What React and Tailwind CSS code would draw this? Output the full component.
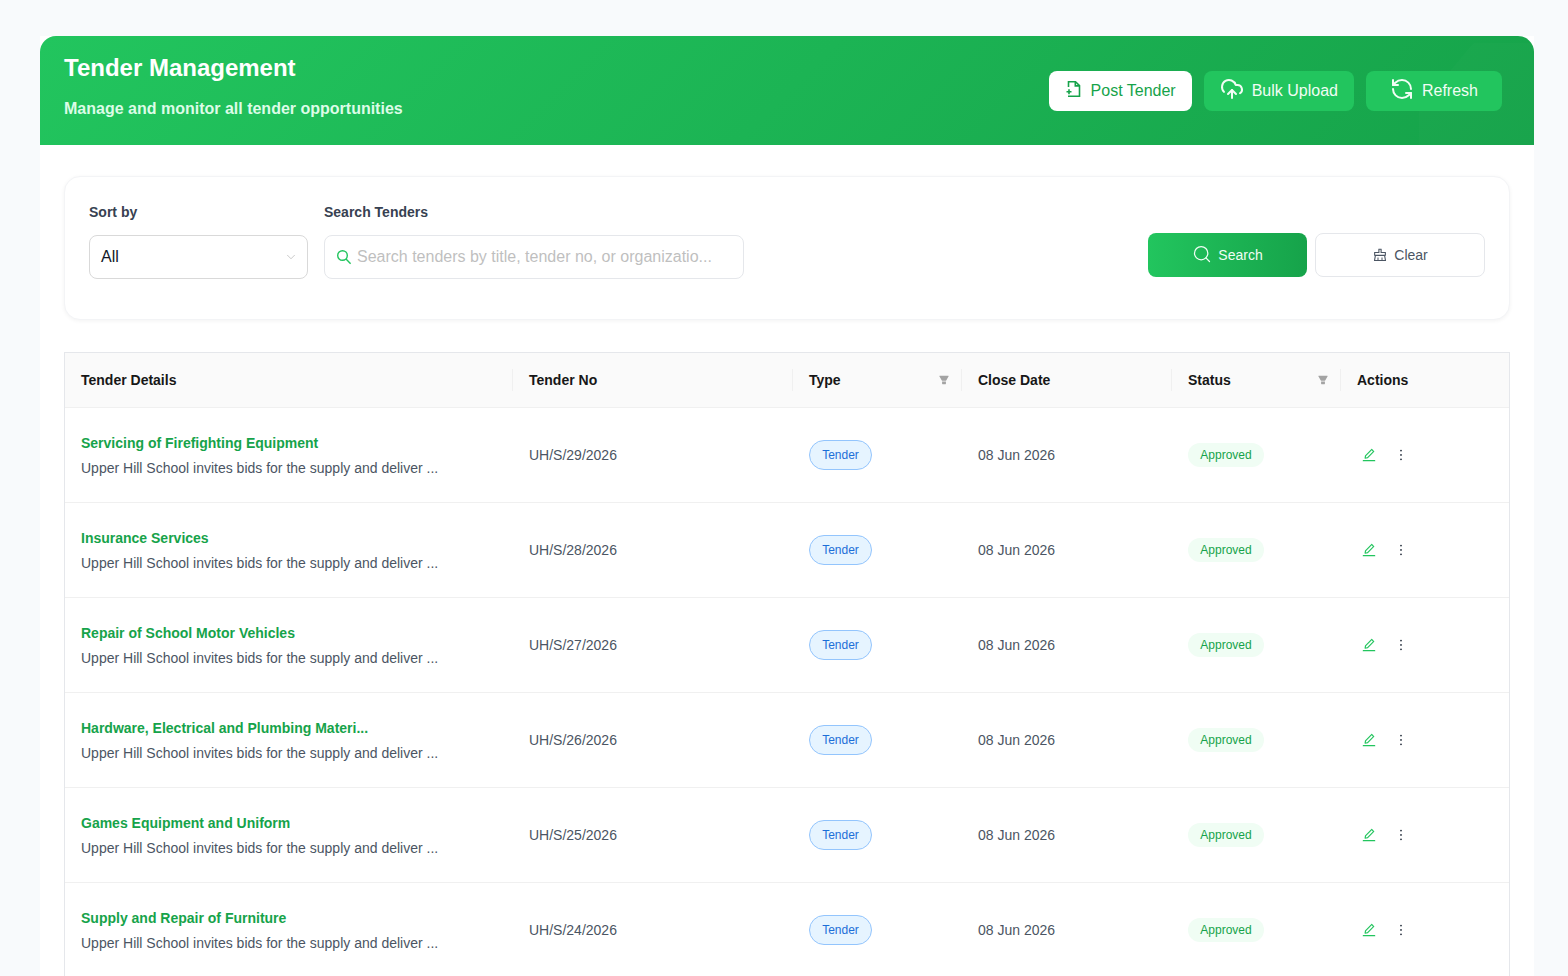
import React from "react";
import { AiFillFilter, AiOutlineClear, AiOutlineEdit, AiOutlineMore } from "react-icons/ai";
import { ChevronDown, CloudUpload, RefreshCcw, Search } from "lucide-react";

const rows = [
  { title: "Servicing of Firefighting Equipment", no: "UH/S/29/2026" },
  { title: "Insurance Services", no: "UH/S/28/2026" },
  { title: "Repair of School Motor Vehicles", no: "UH/S/27/2026" },
  { title: "Hardware, Electrical and Plumbing Materi...", no: "UH/S/26/2026" },
  { title: "Games Equipment and Uniform", no: "UH/S/25/2026" },
  { title: "Supply and Repair of Furniture", no: "UH/S/24/2026" },
];

function FileAdd() {
  return (
    <svg width="18" height="18" viewBox="0 0 18 18" fill="none" stroke="currentColor" strokeWidth="1.6" className="-mt-1">
      <path d="M3.5 7 V1.7 H10.5 L14.5 5.7 V16.3 H3" />
      <path d="M10.3 1.7 V5.9 H14.5" />
      <path d="M1.5 11.8 H6.5 M4 9.3 V14.3" />
    </svg>
  );
}

function InputSearch() {
  return (
    <svg width="16" height="16" viewBox="0 0 16 16" fill="none" stroke="currentColor" strokeWidth="1.4" className="text-[#22c55e]">
      <circle cx="6.5" cy="6.5" r="4.8" />
      <path d="M10 10 L14.6 14.8" />
    </svg>
  );
}

function HeaderCell({ label, filter, className }) {
  return (
    <div className={`relative flex items-center justify-between px-4 ${className}`}>
      <span>{label}</span>
      {filter && <AiFillFilter className="text-[12px] text-[#a3a3a3]" />}
      <span className="absolute right-0 top-1/2 h-[22px] w-px -translate-y-1/2 bg-[#f0f0f0]" />
    </div>
  );
}

export default function App() {
  return (
    <div className="h-[976px] overflow-hidden bg-[#f8fafc] pt-9 pl-10 pr-[34px] font-['Liberation_Sans',Arial,sans-serif]">
      <div className="min-h-full bg-white">
        <div className="relative flex h-[109px] items-center justify-between overflow-hidden rounded-t-2xl bg-[linear-gradient(135deg,#22c55e,#16a34a)] pl-6 pr-8">
          <svg className="absolute right-0 top-0" width="120" height="109" viewBox="0 0 120 109">
            <path d="M60 7 L120 7 L120 109 L5 109 L5 72 L55 12 Z" fill="#ffffff" fillOpacity="0.015" />
          </svg>
          <div className="relative -mt-[9px]">
            <h1 className="text-2xl font-bold leading-8 text-white">Tender Management</h1>
            <p className="mt-[13px] text-base font-bold leading-6 text-[#dcfce7]">Manage and monitor all tender opportunities</p>
          </div>
          <div className="relative flex gap-3">
            <button className="flex h-10 items-center gap-2 rounded-lg bg-white px-4 text-base text-[#16a34a]">
              <FileAdd />
              Post Tender
            </button>
            <button className="flex h-10 items-center gap-2 rounded-lg bg-[#22c55e] px-4 text-base text-[#f0fdf4]">
              <CloudUpload size={24} strokeWidth={2} className="-mt-1" />
              Bulk Upload
            </button>
            <button className="flex h-10 items-center gap-2 rounded-lg bg-[#22c55e] pl-6 pr-6 text-base text-[#f0fdf4]">
              <RefreshCcw size={24} strokeWidth={2} className="-mt-1" />
              Refresh
            </button>
          </div>
        </div>

        <div className="px-6 pt-8">
          <div className="-mt-px flex h-[144px] items-start justify-between rounded-2xl border border-[#f3f4f6] bg-white pl-6 pr-6 pt-[27px] shadow-[0_1px_4px_rgba(0,0,0,0.05)]">
            <div className="flex gap-4">
              <div className="w-[219px]">
                <label className="block text-sm font-bold leading-4 text-[#374151]">Sort by</label>
                <div className="mt-[15px] flex h-11 items-center justify-between rounded-lg border border-[#d9d9d9] pl-[11px] pr-[11px]">
                  <span className="text-base text-[#111827]">All</span>
                  <ChevronDown size={14} strokeWidth={1} className="-mr-0.5 text-[#a3a3a3]" />
                </div>
              </div>
              <div className="w-[420px]">
                <label className="block text-sm font-bold leading-4 text-[#374151]">Search Tenders</label>
                <div className="mt-[15px] flex h-11 items-center gap-[5px] rounded-lg border border-[#e5e7eb] pl-[11px] pr-3">
                  <InputSearch />
                  <span className="text-base text-[#bfbfbf]">Search tenders by title, tender no, or organizatio...</span>
                </div>
              </div>
            </div>
            <div className="mt-[29px] flex gap-2">
              <button className="flex h-11 w-[159px] items-center justify-center gap-1.5 rounded-lg bg-gradient-to-r from-[#22c55e] to-[#16a34a] text-sm text-[#f0fdf4]">
                <Search size={20} strokeWidth={1.5} className="-mt-0.5" />
                Search
              </button>
              <button className="flex h-11 w-[170px] items-center justify-center gap-1.5 rounded-lg border border-[#e5e7eb] bg-white text-sm text-[#4b5563]">
                <AiOutlineClear className="text-[16px]" />
                Clear
              </button>
            </div>
          </div>

          <div className="mt-8 border border-[#e5e7eb] text-sm">
            <div className="grid h-[55px] grid-cols-[448px_280px_169px_210px_169px_1fr] items-center border-b border-[#f0f0f0] bg-[#fafafa] font-bold text-[#171717]">
              <HeaderCell label="Tender Details" />
              <HeaderCell label="Tender No" />
              <HeaderCell label="Type" filter className="pr-3" />
              <HeaderCell label="Close Date" />
              <HeaderCell label="Status" filter className="pr-3" />
              <div className="px-4">Actions</div>
            </div>
            {rows.map((row) => (
              <div key={row.no} className="grid h-[95px] grid-cols-[448px_280px_169px_210px_169px_1fr] items-center border-b border-[#f0f0f0] text-[#4b5563]">
                <div className="px-4">
                  <div className="font-bold leading-5 text-[#16a34a]">{row.title}</div>
                  <div className="mt-[5px] leading-5">Upper Hill School invites bids for the supply and deliver ...</div>
                </div>
                <div className="px-4">{row.no}</div>
                <div className="px-4">
                  <span className="inline-flex h-[30px] w-[63px] items-center justify-center rounded-full border border-[#93c5fd] bg-[#e6f4ff] text-xs text-[#1d6fd8]">Tender</span>
                </div>
                <div className="px-4">08 Jun 2026</div>
                <div className="px-4">
                  <span className="inline-flex h-6 w-[76px] items-center justify-center rounded-full bg-[#f0fdf4] text-xs text-[#16a34a]">Approved</span>
                </div>
                <div className="flex items-center gap-4 px-5">
                  <AiOutlineEdit className="text-[16px] text-[#22c55e]" />
                  <AiOutlineMore className="text-[16px] text-[#1f2937]" />
                </div>
              </div>
            ))}
          </div>
        </div>
      </div>
    </div>
  );
}
